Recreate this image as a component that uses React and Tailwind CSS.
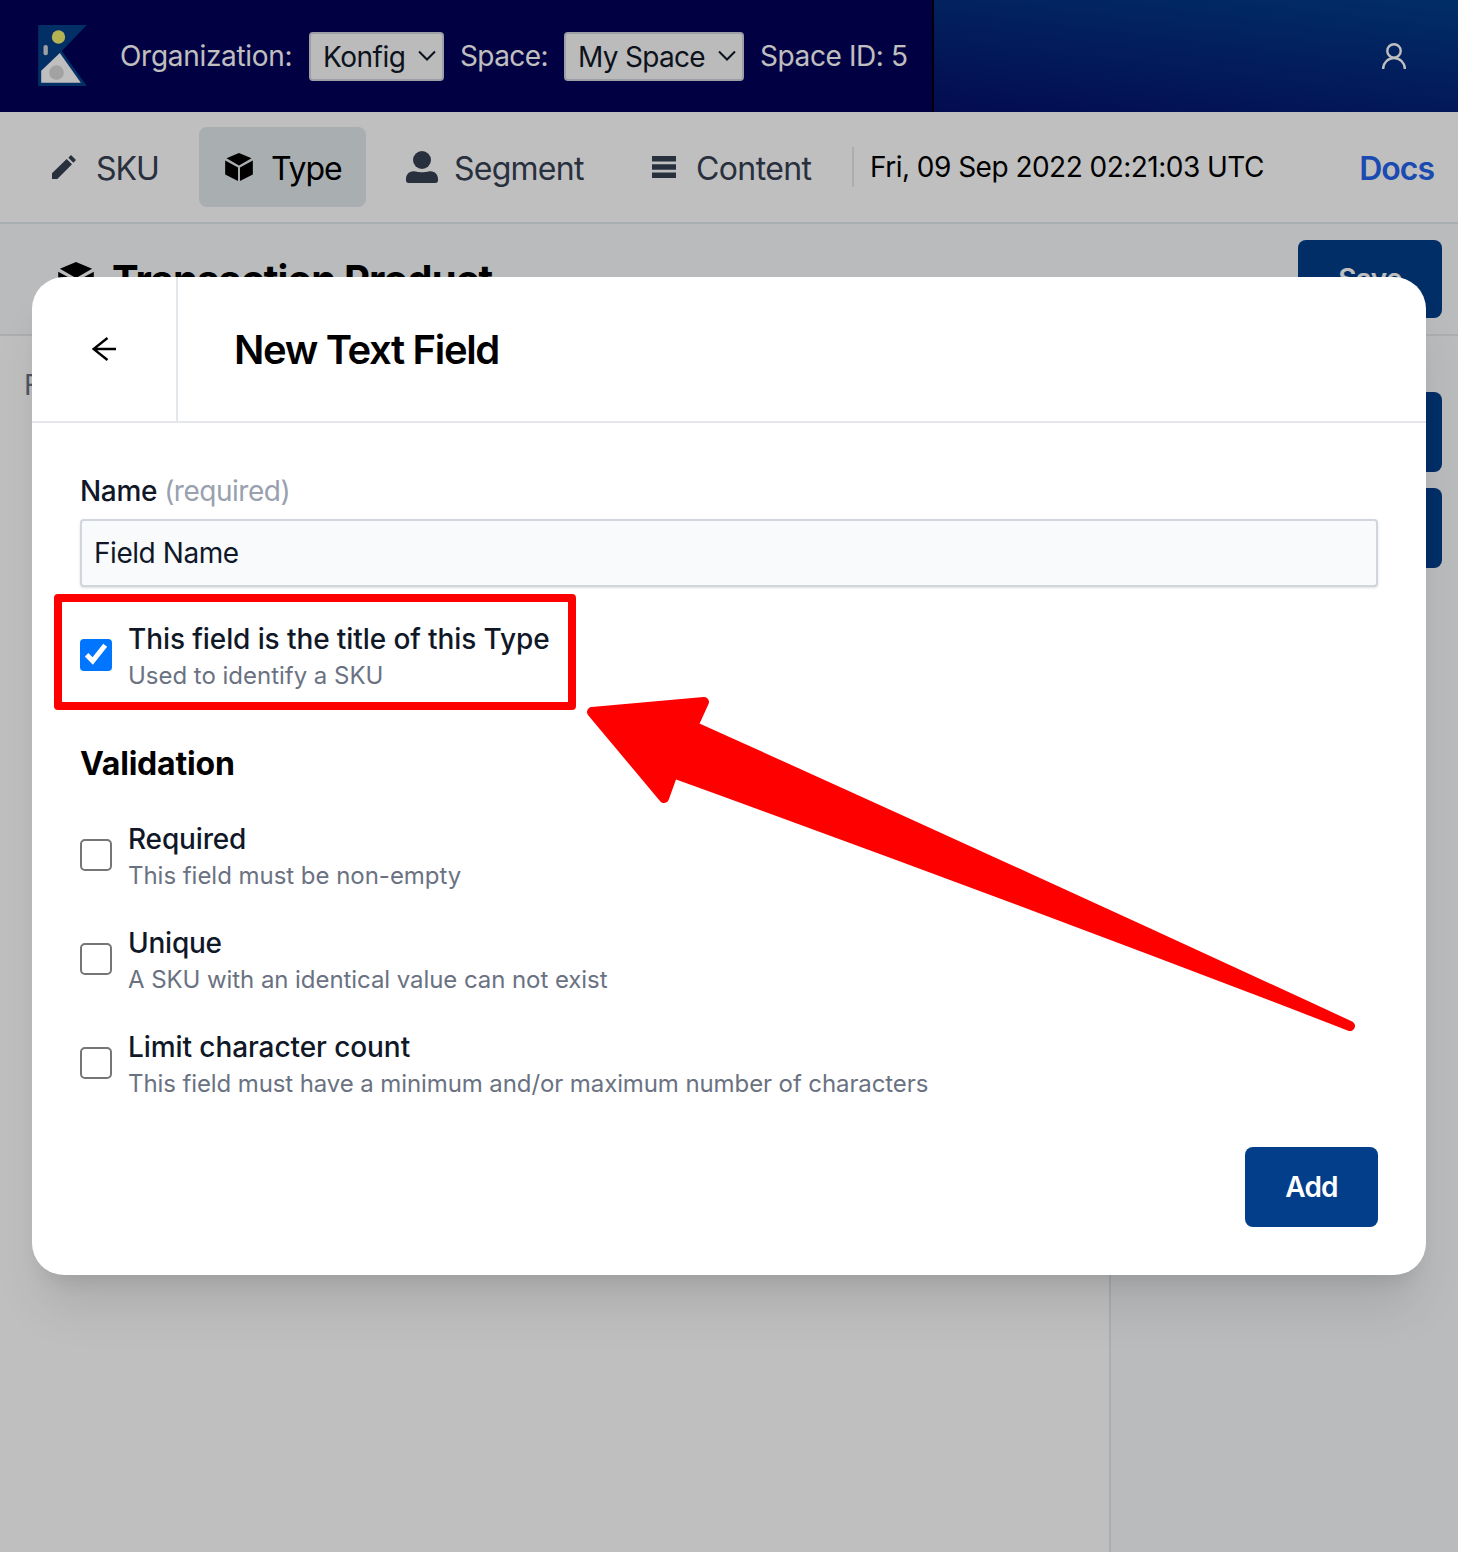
import React from "react";

function CubeIcon({ className }) {
  return (
    <svg viewBox="0 0 84 85" className={className} fill="currentColor">
      <path d="M42 0 80 16 42 38 4 16ZM0 23 39 44V85L0 65ZM84 23 45 44V85L84 65Z" />
    </svg>
  );
}

function PencilIcon() {
  return (
    <svg viewBox="0 0 72 72" className="w-6 h-6" fill="currentColor">
      <path d="M0 72V55L44 12 60 28 16 72ZM49 8 57 0 72 15 64 23Z" />
    </svg>
  );
}

function PersonIcon() {
  return (
    <svg viewBox="0 0 96 96" className="w-8 h-8" fill="currentColor">
      <circle cx="48" cy="27" r="27" />
      <path d="M22 61C30 61 34 64 48 64S66 61 74 61C87 61 96 72 96 84V88Q96 96 88 96H8Q0 96 0 88V84C0 72 9 61 22 61Z" />
    </svg>
  );
}

function RowsIcon() {
  return (
    <svg viewBox="0 0 24 22" className="w-6 h-[22px]" fill="currentColor">
      <path d="M0 0H24V5.6H0ZM0 8.2H24V13.8H0ZM0 16.4H24V22H0Z" />
    </svg>
  );
}

function Logo() {
  return (
    <svg viewBox="0 0 146 183" className="mb-0.5 w-[49px] h-[61px]">
      <path d="M0 0H146L71 78 146 183H0Z" fill="#043f8a" />
      <circle cx="61" cy="36" r="20" fill="#f1ef71" />
      <rect x="16" y="60" width="13" height="31" rx="6" fill="#d4d4d4" />
      <path d="M65 84 128 173H9V137Z" fill="#fff" />
      <circle cx="55" cy="143" r="22" fill="#d9d9d9" />
    </svg>
  );
}

function Select({ label, className, textClass }) {
  return (
    <div className={"flex h-[49px] items-center justify-between rounded-sm border-2 border-gray-300 bg-[#fafafa] pl-3 pr-1.5 text-gray-900 " + className}>
      <span className={"pt-0.5 " + textClass}>{label}</span>
      <svg viewBox="0 0 18 11" className="mb-0.5 h-[11px] w-[18px] shrink-0" fill="none" stroke="currentColor" strokeWidth="2">
        <path d="M1 1.5 9 9.5 17 1.5" />
      </svg>
    </div>
  );
}

function Option({ title, hint, checked, titleClass, hintClass }) {
  return (
    <div className="flex h-[72px] items-center gap-4">
      {checked ? (
        <span className="flex h-8 w-8 items-center justify-center rounded-[4px] bg-[#0075ff]">
          <svg viewBox="0 0 32 32" className="h-8 w-8" fill="none" stroke="#fff" strokeWidth="5">
            <path d="M6.6 15.8 12.7 22 25.2 6.3" />
          </svg>
        </span>
      ) : (
        <span className="h-8 w-8 rounded-[5px] border-2 border-[#767676] bg-white" />
      )}
      <div className="whitespace-nowrap">
        <div className={"text-[28px] leading-10 font-medium text-gray-900 " + titleClass}>{title}</div>
        <div className={"pt-px text-[24px] leading-[31px] text-gray-500 " + hintClass}>{hint}</div>
      </div>
    </div>
  );
}

function Header() {
  return (
    <header className="flex h-28 text-[28px] text-white">
      <div className="flex w-[934px] shrink-0 items-center whitespace-nowrap border-r-2 border-black bg-[#000058] pl-[38px]">
        <Logo />
        <span className="ml-[33px] w-[189px] tracking-[-0.3px]">Organization:</span>
        <Select label="Konfig" className="w-[135px]" textClass="tracking-[-0.5px]" />
        <span className="ml-4 w-[104px] tracking-[-0.6px]">Space:</span>
        <Select label="My Space" className="w-[180px]" textClass="tracking-[-0.7px]" />
        <span className="ml-4 tracking-[-0.4px]">Space ID: 5</span>
      </div>
      <div className="flex flex-1 items-center justify-end bg-[linear-gradient(187deg,#023e8a,#05106c)] pr-[52px]">
        <svg viewBox="0 0 24 26" className="h-[26px] w-6" fill="none" stroke="currentColor" strokeWidth="2.4">
          <circle cx="12" cy="7.9" r="6.7" />
          <path d="M1.1 26A10.9 11 0 0 1 22.9 26" />
        </svg>
      </div>
    </header>
  );
}

function Nav() {
  return (
    <nav className="flex h-28 items-center whitespace-nowrap border-b-2 border-[#e2e8ec] bg-white text-[32px] text-gray-700">
      <div className="ml-[52px] flex w-[147px] items-center gap-5"><PencilIcon /><span className="pt-[3px] tracking-[-1px]">SKU</span></div>
      <div className="flex h-20 w-[167px] items-center gap-[18px] rounded-lg bg-[#e2e8ec] pl-[26px] text-black">
        <CubeIcon className="h-7 w-7" /><span className="pt-[3px] tracking-[-1.1px]">Type</span>
      </div>
      <div className="ml-10 flex w-[246px] items-center gap-4"><PersonIcon /><span className="pt-[3px] tracking-[-0.75px]">Segment</span></div>
      <div className="flex w-[200px] items-center gap-5"><RowsIcon /><span className="pt-[3px] tracking-[-0.6px]">Content</span></div>
      <div className="flex h-10 items-center border-l-2 border-[#e2e8ec] pl-4 text-[28px] tracking-[-0.52px] text-black">
        Fri, 09 Sep 2022 02:21:03 UTC
      </div>
      <a className="ml-auto mr-6 pt-[3px] font-semibold tracking-[-1px] text-[#2563eb]">Docs</a>
    </nav>
  );
}

function Page() {
  return (
    <div className="flex h-full flex-col">
      <Header />
      <Nav />
      <div className="flex h-28 shrink-0 items-start justify-between border-b-2 border-gray-200 bg-slate-50 pl-[58px] pr-4 pt-4">
        <div className="flex items-center gap-[18px] pt-[19px]">
          <CubeIcon className="h-9 w-9" />
          <h1 className="pt-px text-[40px] leading-10 font-bold tracking-[-0.82px]">Transaction Product</h1>
        </div>
        <div className="flex h-[78px] w-36 items-center justify-center rounded-lg bg-[#023e8a] text-[28px] font-semibold tracking-[-0.7px] text-white">Save</div>
      </div>
      <div className="flex flex-1">
        <div className="w-[1109px] bg-white pl-6 pt-[29px] text-[28px] leading-10 text-gray-500">Fields</div>
        <div className="flex flex-1 flex-col gap-4 border-l-2 border-[#e2e8ec] bg-slate-50 px-4 pt-14">
          <div className="h-20 rounded-lg bg-[#023e8a]" />
          <div className="h-20 rounded-lg bg-[#023e8a]" />
        </div>
      </div>
    </div>
  );
}

function Modal() {
  return (
    <section className="flex h-[998px] flex-col rounded-[32px] bg-white shadow-[0_40px_50px_-10px_rgba(0,0,0,0.1),0_16px_20px_-12px_rgba(0,0,0,0.1)]">
      <div className="flex h-[146px] shrink-0 border-b-2 border-gray-200">
        <div className="flex w-[146px] items-center justify-center border-r-2 border-[#e2e8ec]">
          <svg viewBox="0 0 24 24" className="h-6 w-6" fill="none" stroke="#000" strokeWidth="2.4">
            <path d="M24 12H1.5M15.5 1 1.5 12 15.5 23" />
          </svg>
        </div>
        <h2 className="flex items-center pl-14 pt-0.5 text-[40px] font-semibold tracking-[-1.35px]">New Text Field</h2>
      </div>
      <div className="flex flex-1 flex-col px-12 pb-12 pt-12">
        <label className="text-[28px] leading-10 font-medium tracking-[-0.35px] text-gray-900">
          Name <span className="font-normal tracking-[-0.48px] text-gray-400">(required)</span>
        </label>
        <div className="mt-2 flex h-[68px] items-center rounded-[4px] border-2 border-gray-300 bg-slate-50 pl-3 text-[28px] tracking-[-0.45px] text-gray-900 shadow-sm">Field Name</div>
        <div className="mt-8">
          <Option checked title="This field is the title of this Type" hint="Used to identify a SKU" titleClass="tracking-[-0.1px]" hintClass="tracking-[-0.02px]" />
        </div>
        <h3 className="mt-[49px] text-[32px] leading-[47px] font-bold tracking-[-0.2px]">Validation</h3>
        <div className="mt-8 flex flex-col gap-8">
          <Option title="Required" hint="This field must be non-empty" titleClass="tracking-[-0.15px]" hintClass="tracking-[-0.03px]" />
          <Option title="Unique" hint="A SKU with an identical value can not exist" titleClass="tracking-[-0.25px]" hintClass="tracking-[-0.07px]" />
          <Option title="Limit character count" hint="This field must have a minimum and/or maximum number of characters" titleClass="tracking-[-0.08px]" hintClass="tracking-[-0.1px]" />
        </div>
        <div className="mt-12 flex h-20 w-[133px] items-center justify-center self-end rounded-lg bg-[#023e8a] text-[28px] font-semibold tracking-[-0.8px] text-white">Add</div>
      </div>
    </section>
  );
}

export default function App() {
  return (
    <main className="relative h-[1552px] w-[1458px] overflow-hidden font-['Inter',sans-serif]">
      <Page />
      <div className="absolute inset-0 bg-black/25 px-8 pt-[277px]">
        <Modal />
      </div>
      <div className="absolute left-[54px] top-[594px] h-[116px] w-[522px] rounded-[4px] border-8 border-[#ff0000]" />
      <svg viewBox="0 0 770 336" className="absolute left-[586px] top-[695px] h-[336px] w-[770px]" fill="#ff0000" stroke="#ff0000" strokeWidth="10" strokeLinejoin="round">
        <path d="M6 17 118 7 107 31Q435 179 764 331Q427 201 87 78L78 103Z" />
      </svg>
    </main>
  );
}
